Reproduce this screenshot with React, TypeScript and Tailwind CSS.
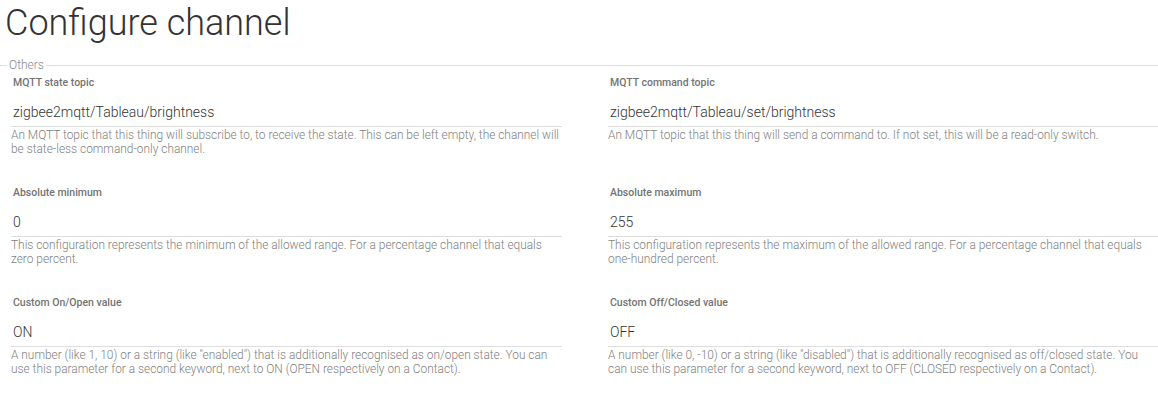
import React from "react"

type Field = {
  label: string
  value: string
  help: string
}

// pairs of fields, left / right column
const rows: [Field, Field][] = [
  [
    {
      label: "MQTT state topic",
      value: "zigbee2mqtt/Tableau/brightness",
      help: "An MQTT topic that this thing will subscribe to, to receive the state. This can be left empty, the channel will be state-less command-only channel.",
    },
    {
      label: "MQTT command topic",
      value: "zigbee2mqtt/Tableau/set/brightness",
      help: "An MQTT topic that this thing will send a command to. If not set, this will be a read-only switch.",
    },
  ],
  [
    {
      label: "Absolute minimum",
      value: "0",
      help: "This configuration represents the minimum of the allowed range. For a percentage channel that equals zero percent.",
    },
    {
      label: "Absolute maximum",
      value: "255",
      help: "This configuration represents the maximum of the allowed range. For a percentage channel that equals one-hundred percent.",
    },
  ],
  [
    {
      label: "Custom On/Open value",
      value: "ON",
      help: 'A number (like 1, 10) or a string (like "enabled") that is additionally recognised as on/open state. You can use this parameter for a second keyword, next to ON (OPEN respectively on a Contact).',
    },
    {
      label: "Custom Off/Closed value",
      value: "OFF",
      help: 'A number (like 0, -10) or a string (like "disabled") that is additionally recognised as off/closed state. You can use this parameter for a second keyword, next to OFF (CLOSED respectively on a Contact).',
    },
  ],
]

function ConfigField({ field }: { field: Field }) {
  return (
    <div className="pt-[5px] pb-[26px]">
      <label className="block pl-[2px] text-[10.5px] leading-[12px] font-medium text-[#737373]">
        {field.label}
      </label>
      <input
        readOnly
        value={field.value}
        className="mt-[8px] block w-full h-[30px] pl-[2px] border-b border-[#dedede] bg-transparent text-[14px] font-light text-[#333] outline-none"
      />
      <p className="mt-[1px] text-[11.9px] leading-[14px] font-light text-[#808080]">
        {field.help}
      </p>
    </div>
  )
}

export default function App() {
  return (
    <div className="w-[1158px] h-[400px] overflow-hidden bg-white font-[family-name:Roboto,sans-serif]">
      <h1 className="mt-[3px] pl-[5px] text-[36px] leading-[40px] font-light text-[#333]">
        Configure channel
      </h1>

      {/* Group header */}
      <div className="mt-[15px] flex items-center h-[14px]">
        <span className="w-[7px] h-px bg-[#dedede]" />
        <span className="px-[2px] text-[12px] leading-[14px] font-light text-[#888]">Others</span>
        <span className="flex-1 h-px bg-[#dedede]" />
      </div>

      <div className="grid grid-cols-[551px_1fr] gap-x-[46px] pl-[11px]">
        {rows.map(([left, right], i) => (
          <React.Fragment key={i}>
            <ConfigField field={left} />
            <ConfigField field={right} />
          </React.Fragment>
        ))}
      </div>
    </div>
  )
}
